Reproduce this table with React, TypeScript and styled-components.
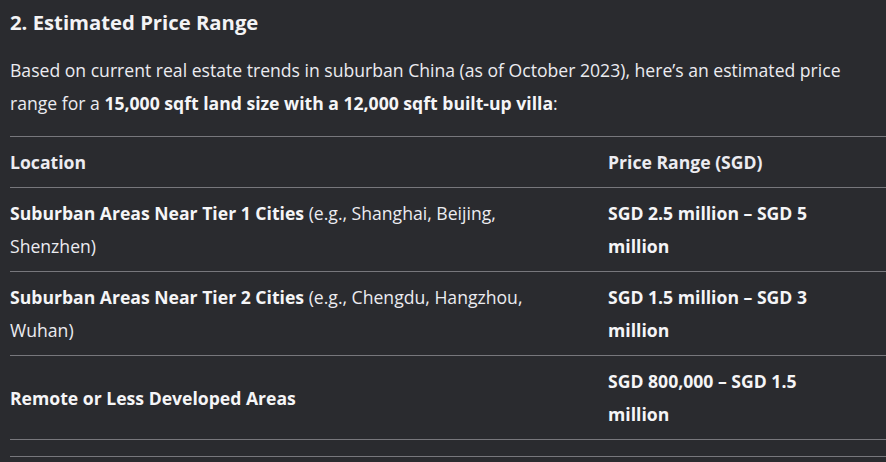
import React from 'react'
import styled, { createGlobalStyle } from 'styled-components'

const GlobalStyle = createGlobalStyle`
  html, body {
    margin: 0;
    padding: 0;
    background: #2a2b2f;
  }
  body {
    font-family: 'Open Sans', 'Noto Sans', sans-serif;
    color: #ececf1;
  }
`

const Page = styled.div`
  width: 886px;
  height: 462px;
  overflow: hidden;
  background: #2a2b2f;
  padding: 0 0 0 10px;
  box-sizing: border-box;
`

const Heading = styled.h3`
  margin: 0;
  padding-top: 9px;
  font-size: 20.3px;
  line-height: 26px;
  font-weight: 700;
  color: #f3f3f5;
`

const Para = styled.p`
  margin: 19px 0 0;
  font-size: 17.6px;
  line-height: 33px;
  color: #ececf1;
`

const Table = styled.table`
  margin-top: 16px;
  width: 900px;
  table-layout: fixed;
  border-collapse: collapse;
  font-size: 17.6px;
  line-height: 33px;
`

const Row = styled.tr`
  border-top: 1px solid #77777c;
  border-bottom: 1px solid #77777c;
`

const Cell = styled.td<{ $wide?: boolean }>`
  padding: 9px 0 8px;
  vertical-align: middle;
  text-align: left;
  width: ${({ $wide }) => ($wide ? '560px' : 'auto')};
  padding-right: ${({ $wide }) => ($wide ? '38px' : '66px')};
  color: #ececf1;
`

const HeadCell = styled(Cell).attrs({ as: 'th' })`
  font-weight: 700;
`

const Strong = styled.strong`
  font-weight: 700;
  color: #f5f5f7;
`

const Divider = styled.div`
  margin-top: 16px;
  border-top: 1px solid #77777c;
`

const rows = [
  { place: 'Suburban Areas Near Tier 1 Cities', note: ' (e.g., Shanghai, Beijing, Shenzhen)', price: 'SGD 2.5 million – SGD 5 million' },
  { place: 'Suburban Areas Near Tier 2 Cities', note: ' (e.g., Chengdu, Hangzhou, Wuhan)', price: 'SGD 1.5 million – SGD 3 million' },
  { place: 'Remote or Less Developed Areas', note: '', price: 'SGD 800,000 – SGD 1.5 million' },
]

const App = () => (
  <Page>
    <GlobalStyle />
    <Heading>2. Estimated Price Range</Heading>
    <Para>
      Based on current real estate trends in suburban China (as of October 2023), here’s an estimated price
      range for a <Strong>15,000 sqft land size with a 12,000 sqft built-up villa</Strong>:
    </Para>
    <Table>
      <thead>
        <Row>
          <HeadCell $wide>Location</HeadCell>
          <HeadCell>Price Range (SGD)</HeadCell>
        </Row>
      </thead>
      <tbody>
        {rows.map(r => (
          <Row key={r.place}>
            <Cell $wide>
              <Strong>{r.place}</Strong>
              {r.note}
            </Cell>
            <Cell>
              <Strong>{r.price}</Strong>
            </Cell>
          </Row>
        ))}
      </tbody>
    </Table>
    <Divider />
  </Page>
)

export default App
